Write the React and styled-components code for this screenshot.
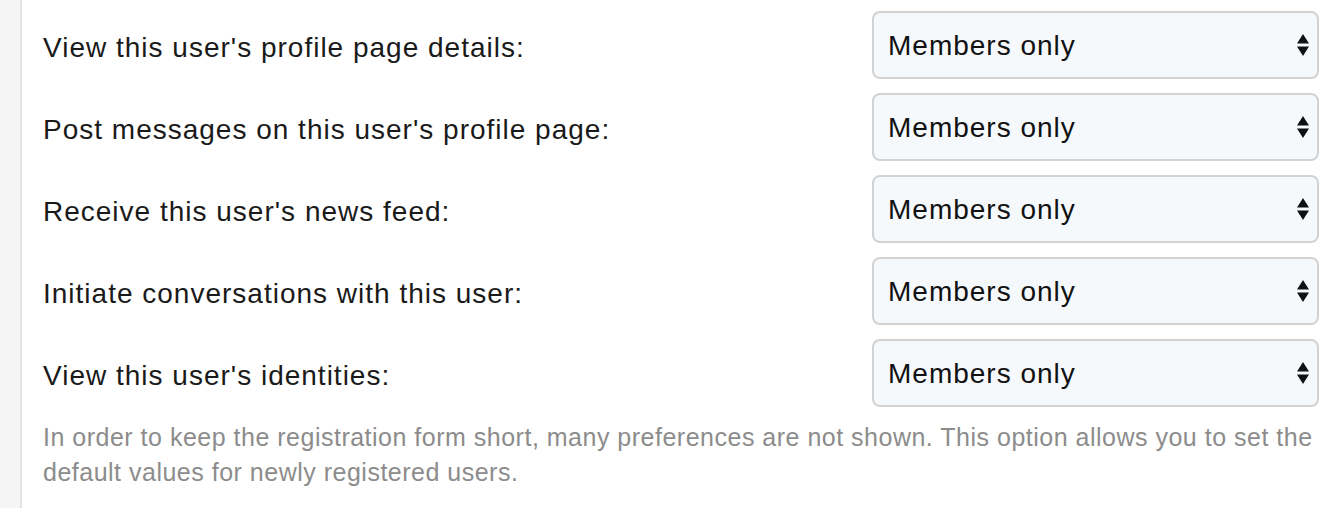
import React from "react";
import styled, { createGlobalStyle } from "styled-components";

const GlobalStyle = createGlobalStyle`
  html, body {
    margin: 0;
    padding: 0;
    background: #f5f5f5;
    font-family: "Liberation Sans", Arial, Helvetica, sans-serif;
  }
`;

const Page = styled.div`
  display: flex;
  min-height: 508px;
  padding-left: 20px;
`;

const Panel = styled.div`
  flex: 1;
  background: #ffffff;
  border-left: 2px solid #e4e4e4;
  padding: 11px 15px 20px 21px;
`;

const Form = styled.div`
  display: flex;
  flex-direction: column;
  gap: 14px;
`;

const Row = styled.div`
  display: grid;
  grid-template-columns: 1fr 447px;
  align-items: start;
`;

const Label = styled.label`
  font-size: 28px;
  letter-spacing: 1px;
  line-height: 40px;
  padding-top: 17px;
  color: #1a1a1a;
`;

const SelectWrap = styled.div`
  position: relative;
  height: 68px;
`;

const Select = styled.select`
  appearance: none;
  -webkit-appearance: none;
  width: 100%;
  height: 100%;
  box-sizing: border-box;
  margin: 0;
  padding: 0 40px 0 14px;
  border: 2px solid #d2d2d2;
  border-radius: 8px;
  background: #f6f9fc;
  color: #111;
  font-family: inherit;
  font-size: 28px;
  letter-spacing: 1px;
  outline: none;
`;

const Arrows = styled.svg`
  position: absolute;
  right: 10px;
  top: 50%;
  transform: translateY(-50%);
  pointer-events: none;
`;

const Help = styled.p`
  margin: 13px 0 0;
  font-size: 25px;
  letter-spacing: 0.5px;
  line-height: 35px;
  color: #8c8c8c;
`;

const rows = [
  "View this user's profile page details:",
  "Post messages on this user's profile page:",
  "Receive this user's news feed:",
  "Initiate conversations with this user:",
  "View this user's identities:",
];

function PrivacySelect() {
  return (
    <SelectWrap>
      <Select defaultValue="members">
        <option value="everyone">All visitors</option>
        <option value="members">Members only</option>
        <option value="followed">People followed</option>
        <option value="none">Nobody</option>
      </Select>
      <Arrows width="12" height="22" viewBox="0 0 12 22">
        <path d="M6 0 L12 9.5 L0 9.5 Z" fill="#111" />
        <path d="M0 12.5 L12 12.5 L6 22 Z" fill="#111" />
      </Arrows>
    </SelectWrap>
  );
}

export default function App() {
  return (
    <>
      <GlobalStyle />
      <Page>
        <Panel>
          <Form>
            {rows.map((text) => (
              <Row key={text}>
                <Label>{text}</Label>
                <PrivacySelect />
              </Row>
            ))}
          </Form>
          <Help>
            In order to keep the registration form short, many preferences are
            not shown. This option allows you to set the default values for
            newly registered users.
          </Help>
        </Panel>
      </Page>
    </>
  );
}
